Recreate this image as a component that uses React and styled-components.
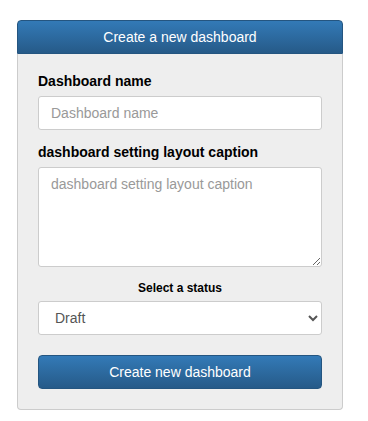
import React from 'react';
import styled, { createGlobalStyle } from 'styled-components';

const GlobalStyle = createGlobalStyle`
  body {
    margin: 0;
    background: #fff;
    font-family: "Liberation Sans", Arial, sans-serif;
    font-size: 14px;
    color: #333;
  }
  * { box-sizing: border-box; }
`;

const Page = styled.div`
  padding: 20px 25px 20px 17px;
  width: 368px;
`;

const Card = styled.div`
  width: 326px;
`;

const Header = styled.div`
  height: 34px;
  display: flex;
  align-items: center;
  justify-content: center;
  color: #fff;
  font-size: 14px;
  border: 1px solid #245580;
  border-radius: 4px 4px 0 0;
  background: linear-gradient(to bottom, #337ab7 0%, #265a88 100%);
`;

const Body = styled.form`
  display: flex;
  flex-direction: column;
  padding: 17px 20px 20px;
  background: #eee;
  border: 1px solid #ccc;
  border-top: none;
  border-radius: 0 0 4px 4px;
`;

const Label = styled.label`
  display: block;
  font-weight: bold;
  font-size: ${p => (p.$small ? '12px' : '14px')};
  line-height: ${p => (p.$small ? '16px' : '20px')};
  text-align: ${p => (p.$center ? 'center' : 'left')};
  color: #000;
  margin-bottom: 5px;
`;

const Field = styled.div`
  margin-bottom: ${p => p.$gap || 12}px;
`;

const fieldBase = `
  width: 100%;
  border: 1px solid #ccc;
  border-radius: 3px;
  background: #fff;
  font-family: "Liberation Sans", Arial, sans-serif;
  font-size: 14px;
  color: #555;
  outline: none;
  &::placeholder { color: #999; }
`;

const Input = styled.input`
  ${fieldBase}
  display: block;
  height: 34px;
  padding: 6px 12px;
`;

const TextArea = styled.textarea`
  ${fieldBase}
  display: block;
  height: 100px;
  padding: 6px 12px;
  line-height: 20px;
`;

const Select = styled.select`
  ${fieldBase}
  display: block;
  height: 34px;
  padding: 6px 12px;
`;

const Submit = styled.button`
  height: 34px;
  width: 100%;
  color: #fff;
  font-family: "Liberation Sans", Arial, sans-serif;
  font-size: 14px;
  border: 1px solid #245580;
  border-radius: 4px;
  background: linear-gradient(to bottom, #337ab7 0%, #265a88 100%);
  cursor: pointer;
`;

export default function App() {
  return (
    <Page>
      <GlobalStyle />
      <Card>
        <Header>Create a new dashboard</Header>
        <Body onSubmit={e => e.preventDefault()}>
          <Field>
            <Label>Dashboard name</Label>
            <Input placeholder="Dashboard name" />
          </Field>
          <Field $gap={13}>
            <Label>dashboard setting layout caption</Label>
            <TextArea placeholder="dashboard setting layout caption" />
          </Field>
          <Field $gap={20}>
            <Label $small $center>Select a status</Label>
            <Select defaultValue="draft">
              <option value="draft">Draft</option>
              <option value="published">Published</option>
            </Select>
          </Field>
          <Submit type="submit">Create new dashboard</Submit>
        </Body>
      </Card>
    </Page>
  );
}
